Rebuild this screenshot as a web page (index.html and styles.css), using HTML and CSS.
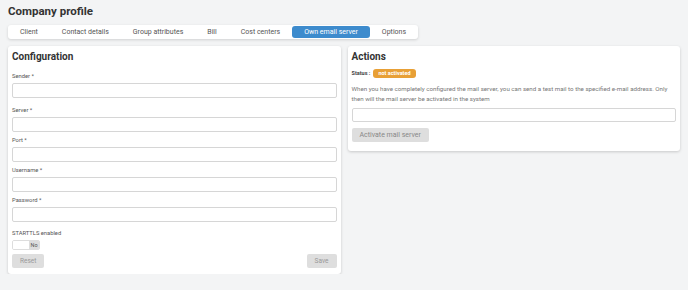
FILE: index.html
```html
<!DOCTYPE html>
<html lang="en">
<head>
  <meta charset="UTF-8" />
  <title>Company profile</title>
  <link rel="stylesheet" href="styles.css">
</head>
<body>
  <h1 class="page-title">Company profile</h1>

  <nav class="tabs">
    <a class="tab">Client</a>
    <a class="tab">Contact details</a>
    <a class="tab">Group attributes</a>
    <a class="tab">Bill</a>
    <a class="tab">Cost centers</a>
    <a class="tab active">Own email server</a>
    <a class="tab">Options</a>
  </nav>

  <div class="columns">
    <section class="card config">
      <h2>Configuration</h2>

      <div class="field first">
        <label>Sender *</label>
        <input type="text" />
      </div>
      <div class="field">
        <label>Server *</label>
        <input type="text" />
      </div>
      <div class="field">
        <label>Port *</label>
        <input type="text" />
      </div>
      <div class="field">
        <label>Username *</label>
        <input type="text" />
      </div>
      <div class="field">
        <label>Password *</label>
        <input type="password" />
      </div>

      <label class="switch-label">STARTTLS enabled</label>
      <div class="switch">
        <span class="knob"></span>
        <span class="state">No</span>
      </div>

      <div class="buttons">
        <button class="btn">Reset</button>
        <button class="btn">Save</button>
      </div>
    </section>

    <section class="card actions">
      <h2>Actions</h2>
      <div class="status">
        <strong>Status :</strong>
        <span class="badge">not activated</span>
      </div>
      <p class="hint">When you have completely configured the mail server, you can send a test mail to the specified e-mail address. Only then will the mail server be activated in the system</p>
      <input type="text" class="test-mail" />
      <button class="btn">Activate mail server</button>
    </section>
  </div>
</body>
</html>
```

FILE: styles.css
```css
body {
  font-family: Roboto, 'Noto Sans', sans-serif;
  background: #f3f4f5;
  margin: 0;
  padding: 0 8px;
  color: #333;
}

.page-title {
  font-size: 11.5px;
  line-height: 16px;
  font-weight: 700;
  margin: 3px 0 0;
  color: #333;
}

.tabs {
  display: inline-flex;
  margin-top: 5px;
  height: 14px;
  background: #fff;
  border-radius: 3px;
  box-shadow: 0 1px 3px rgba(0, 0, 0, 0.15);
  align-items: center;
}

.tab {
  font-size: 7px;
  line-height: 12px;
  padding: 0 12px;
  color: #555;
  border-radius: 3px;
}

.tab.active {
  background: #3d8bcd;
  color: #fff;
}

.columns {
  display: grid;
  grid-template-columns: 1fr 1fr;
  gap: 7px;
  margin-top: 7px;
  align-items: start;
}

.card {
  background: #fff;
  border-radius: 3px;
  box-shadow: 0 1px 3px rgba(0, 0, 0, 0.18);
  padding: 4px 4px 6px;
}

.card h2 {
  font-size: 10px;
  line-height: 14px;
  font-weight: 700;
  margin: 0 0 8px;
  color: #333;
}

.field {
  margin-bottom: 4px;
}

.field.first {
  margin-bottom: 8px;
}

.field label,
.switch-label {
  display: block;
  font-size: 5.8px;
  line-height: 9px;
  margin-bottom: 2px;
  color: #555;
}

input {
  display: block;
  box-sizing: border-box;
  width: 100%;
  height: 15px;
  margin: 0;
  border: 1px solid #d6d6d6;
  border-radius: 2px;
  background: #fff;
}

.switch-label {
  margin-top: 7px;
}

.switch {
  display: flex;
  width: 28px;
  height: 10px;
  border: 1px solid #ddd;
  border-radius: 2px;
  box-sizing: border-box;
  overflow: hidden;
}

.switch .knob {
  flex: 1;
  background: #fff;
}

.switch .state {
  width: 10px;
  background: #ddd;
  font-size: 5.5px;
  line-height: 8px;
  text-align: center;
  color: #555;
}

.buttons {
  display: flex;
  justify-content: space-between;
  margin-top: 4px;
}

.btn {
  height: 14px;
  padding: 0 8px;
  border: none;
  border-radius: 2px;
  background: #dedede;
  color: #999;
  font-family: inherit;
  font-size: 6.5px;
}

.actions {
  padding-bottom: 9px;
}

.actions h2 {
  margin-bottom: 4px;
}

.status {
  display: flex;
  align-items: center;
  gap: 3px;
  height: 10px;
  font-size: 5.5px;
}

.status strong {
  color: #444;
}

.badge {
  background: #e8a036;
  color: #fff;
  border-radius: 3px;
  padding: 0 5px;
  line-height: 9px;
  font-weight: 700;
}

.hint {
  font-size: 6.2px;
  line-height: 10px;
  color: #777;
  margin: 6px 0 4px;
}

.test-mail {
  height: 14px;
}

.actions .btn {
  margin-top: 5px;
  padding: 0 8px;
  font-size: 7px;
  color: #888;
}
```
